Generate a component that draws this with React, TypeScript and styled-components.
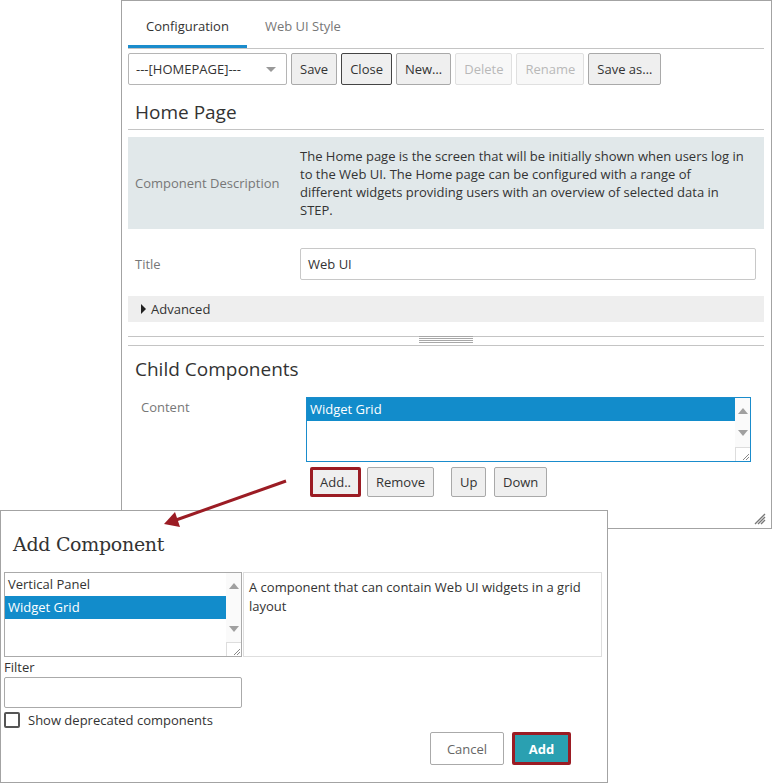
import React from "react";
import styled, { createGlobalStyle } from "styled-components";

const GlobalStyle = createGlobalStyle`
  html, body {
    margin: 0;
    padding: 0;
    background: #fff;
  }
  body {
    font-family: "Open Sans", "Noto Sans", sans-serif;
    font-size: 13px;
    color: #333;
  }
  * {
    box-sizing: border-box;
  }
`;

const RED = "#9b1c24";
const BLUE = "#1a8ccc";

const Desktop = styled.div`
  position: relative;
  width: 772px;
  height: 783px;
  overflow: hidden;
  background: #fff;
`;

const Window = styled.div<{ $left: number; $top: number; $width: number; $height: number }>`
  position: absolute;
  left: ${(p) => p.$left}px;
  top: ${(p) => p.$top}px;
  width: ${(p) => p.$width}px;
  height: ${(p) => p.$height}px;
  border: 1px solid #a3a3a3;
  background: #fff;
  display: flex;
  flex-direction: column;
`;

const MainBody = styled.div`
  padding: 0 7px 0 6px;
  display: flex;
  flex-direction: column;
  flex: 1;
`;

const TabBar = styled.div`
  display: flex;
  border-bottom: 1px solid #c4c4c4;
`;

const Tab = styled.div<{ $active?: boolean }>`
  height: 47px;
  padding: 6px 18px 0;
  display: flex;
  align-items: center;
  border-bottom: 3px solid ${(p) => (p.$active ? BLUE : "transparent")};
  color: ${(p) => (p.$active ? "#333" : "#777")};
`;

const Toolbar = styled.div`
  display: flex;
  gap: 4px;
  margin-top: 4px;
  height: 32px;
`;

const Select = styled.div`
  width: 159px;
  height: 32px;
  border: 1px solid #b5b5b5;
  border-radius: 2px;
  display: flex;
  align-items: center;
  justify-content: space-between;
  padding: 0 10px 0 7px;
  color: #333;
`;

const Caret = styled.span`
  width: 0;
  height: 0;
  border-left: 5px solid transparent;
  border-right: 5px solid transparent;
  border-top: 5px solid #999;
`;

const Button = styled.button<{
  $disabled?: boolean;
  $focused?: boolean;
  $marked?: boolean;
  $compact?: boolean;
  $w?: number;
}>`
  font-family: inherit;
  font-size: 13px;
  height: ${(p) => (p.$compact ? 30 : 32)}px;
  ${(p) => (p.$w ? `width: ${p.$w}px;` : "")}
  padding: 0 ${(p) => (p.$marked ? 7 : 8)}px;
  border-radius: 2px;
  background: ${(p) => (p.$disabled ? "#f8f8f8" : "#efefef")};
  color: ${(p) => (p.$disabled ? "#b8b8b8" : "#333")};
  border: ${(p) =>
    p.$marked
      ? `3px solid ${RED}`
      : p.$focused
      ? "1px solid #444"
      : p.$disabled
      ? "1px solid #e0e0e0"
      : "1px solid #a9a9a9"};
  cursor: default;
`;

const SectionHeading = styled.div<{ $ruled?: boolean }>`
  font-size: 19px;
  line-height: 26px;
  color: #333;
  padding: 0 7px;
  display: flex;
  align-items: flex-end;
  height: ${(p) => (p.$ruled ? 45 : 26)}px;
  padding-bottom: ${(p) => (p.$ruled ? 4 : 0)}px;
  border-bottom: ${(p) => (p.$ruled ? "1px solid #c4c4c4" : "none")};
  margin-top: ${(p) => (p.$ruled ? 0 : 10)}px;
`;

const FieldGrid = styled.div<{ $bg?: string; $top: number; $label: number }>`
  display: grid;
  grid-template-columns: ${(p) => p.$label}px 1fr;
  align-items: center;
  background: ${(p) => p.$bg ?? "transparent"};
  margin-top: ${(p) => p.$top}px;
`;

const Label = styled.div<{ $indent?: number; $alignTop?: boolean }>`
  color: #777;
  padding-left: ${(p) => p.$indent ?? 7}px;
  align-self: ${(p) => (p.$alignTop ? "start" : "center")};
  line-height: 20px;
`;

const Description = styled.div`
  padding: 10px 0 10px 0;
  line-height: 18px;
  color: #333;
  white-space: nowrap;
`;

const TextInput = styled.div`
  height: 32px;
  margin-right: 8px;
  border: 1px solid #c8c8c8;
  border-radius: 2px;
  padding: 0 7px;
  display: flex;
  align-items: center;
  color: #333;
`;

const Collapsible = styled.div`
  margin-top: 16px;
  height: 26px;
  background: #eee;
  display: flex;
  align-items: center;
  gap: 5px;
  padding-left: 13px;
  color: #333;
`;

const RightTriangle = styled.span`
  width: 0;
  height: 0;
  border-top: 5px solid transparent;
  border-bottom: 5px solid transparent;
  border-left: 5px solid #222;
`;

const Splitter = styled.div`
  margin-top: 14px;
  height: 10px;
  border-top: 1px solid #c4c4c4;
  border-bottom: 1px solid #c4c4c4;
  display: flex;
  justify-content: center;
`;

const Grip = styled.div`
  width: 54px;
  height: 7px;
  margin-top: -1px;
  background: repeating-linear-gradient(
    to bottom,
    #a8a8a8 0,
    #a8a8a8 1px,
    transparent 1px,
    transparent 2px
  );
`;

const ListBox = styled.div<{ $focused?: boolean; $height: number }>`
  position: relative;
  height: ${(p) => p.$height}px;
  border: 1px solid ${(p) => (p.$focused ? BLUE : "#aaa")};
  display: flex;
`;

const ListItems = styled.div`
  flex: 1;
  display: flex;
  flex-direction: column;
`;

const ListItem = styled.div<{ $selected?: boolean }>`
  height: 23px;
  line-height: 23px;
  padding-left: 3px;
  background: ${(p) => (p.$selected ? "#128ccb" : "transparent")};
  color: ${(p) => (p.$selected ? "#fff" : "#333")};
`;

const ScrollBar = styled.div`
  width: 15px;
  background: #fafafa;
  display: flex;
  flex-direction: column;
  align-items: center;
`;

const ArrowUp = styled.span<{ $top: number }>`
  margin-top: ${(p) => p.$top}px;
  width: 0;
  height: 0;
  border-left: 5px solid transparent;
  border-right: 5px solid transparent;
  border-bottom: 6px solid #a0a0a0;
`;

const ArrowDown = styled.span<{ $top: number }>`
  margin-top: ${(p) => p.$top}px;
  width: 0;
  height: 0;
  border-left: 5px solid transparent;
  border-right: 5px solid transparent;
  border-top: 6px solid #a0a0a0;
`;

const ResizeCorner = styled.div`
  margin-top: auto;
  width: 15px;
  height: 14px;
  border-top: 1px solid #ddd;
  border-left: 1px solid #ddd;
  background: #fff;
  display: flex;
  align-items: flex-end;
  justify-content: flex-end;
`;

const ButtonRow = styled.div`
  display: flex;
  align-items: center;
  margin-top: 5px;
  padding-left: 4px;
`;

const Spacer = styled.span<{ $w: number }>`
  width: ${(p) => p.$w}px;
  flex: none;
`;

const CornerGrip = styled.div`
  margin-top: auto;
  align-self: flex-end;
  margin-right: 5px;
  margin-bottom: 4px;
  width: 13px;
  height: 13px;
`;

/* dialog */

const DialogTitle = styled.div`
  font-family: "DejaVu Serif", "Liberation Serif", serif;
  font-size: 19px;
  letter-spacing: -0.3px;
  color: #333;
  height: 61px;
  padding: 20px 0 0 12px;
  line-height: 26px;
`;

const DialogBody = styled.div`
  padding: 0 5px 0 3px;
  display: flex;
  flex-direction: column;
`;

const PickerRow = styled.div`
  display: flex;
  gap: 1px;
`;

const PickerList = styled.div`
  width: 238px;
  flex: none;
`;

const HelpBox = styled.div`
  flex: 1;
  height: 85px;
  border: 1px solid #dedede;
  padding: 5px 5px;
  line-height: 19px;
  color: #333;
`;

const FieldLabel = styled.div`
  margin-top: 1px;
  line-height: 18px;
  color: #333;
`;

const FilterInput = styled.div`
  width: 238px;
  height: 31px;
  margin-top: 1px;
  border: 1px solid #aaa;
  border-radius: 2px;
`;

const CheckRow = styled.label`
  display: flex;
  align-items: center;
  gap: 8px;
  margin-top: 4px;
  height: 16px;
  color: #333;
`;

const CheckBox = styled.span`
  width: 16px;
  height: 16px;
  border: 2px solid #555;
  border-radius: 2px;
`;

const DialogActions = styled.div`
  display: flex;
  justify-content: flex-end;
  gap: 8px;
  margin-top: 4px;
  padding-right: 31px;
`;

const DialogButton = styled.button<{ $primary?: boolean }>`
  font-family: inherit;
  font-size: 13px;
  height: 33px;
  border-radius: 2px;
  cursor: default;
  ${(p) =>
    p.$primary
      ? `
    width: 59px;
    background: #2aa0b1;
    color: #fff;
    font-weight: 700;
    border: 3px solid ${RED};
  `
      : `
    width: 74px;
    background: #fff;
    color: #666;
    border: 1px solid #aaa;
  `}
`;

const Overlay = styled.svg`
  position: absolute;
  left: 0;
  top: 0;
  pointer-events: none;
`;

const Hatch = () => (
  <svg width="10" height="10" viewBox="0 0 10 10">
    <path d="M9 3 L3 9 M9 6 L6 9" stroke="#888" strokeWidth="1" />
  </svg>
);

const descriptionLines = [
  "The Home page is the screen that will be initially shown when users log in",
  "to the Web UI. The Home page can be configured with a range of",
  "different widgets providing users with an overview of selected data in",
  "STEP.",
];

export default function App() {
  return (
    <Desktop>
      <GlobalStyle />
      <Window $left={121} $top={0} $width={651} $height={529}>
        <MainBody>
          <TabBar>
            <Tab $active>Configuration</Tab>
            <Tab>Web UI Style</Tab>
          </TabBar>
          <Toolbar>
            <Select>
              <span>---[HOMEPAGE]---</span>
              <Caret />
            </Select>
            <Button>Save</Button>
            <Button $focused>Close</Button>
            <Button>New…</Button>
            <Button $disabled>Delete</Button>
            <Button $disabled>Rename</Button>
            <Button>Save as…</Button>
          </Toolbar>
          <SectionHeading $ruled>Home Page</SectionHeading>
          <FieldGrid $bg="#e1e8ea" $top={7} $label={172}>
            <Label>Component Description</Label>
            <Description>
              {descriptionLines.map((line, i) => (
                <div key={i}>{line}</div>
              ))}
            </Description>
          </FieldGrid>
          <FieldGrid $top={19} $label={172}>
            <Label>Title</Label>
            <TextInput>Web UI</TextInput>
          </FieldGrid>
          <Collapsible>
            <RightTriangle />
            Advanced
          </Collapsible>
          <Splitter>
            <Grip />
          </Splitter>
          <SectionHeading>Child Components</SectionHeading>
          <FieldGrid $top={15} $label={178}>
            <Label $indent={13} $alignTop>
              Content
            </Label>
            <div style={{ marginRight: 13 }}>
              <ListBox $focused $height={65}>
                <ListItems>
                  <ListItem $selected>Widget Grid</ListItem>
                </ListItems>
                <ScrollBar>
                  <ArrowUp $top={10} />
                  <ArrowDown $top={16} />
                  <ResizeCorner>
                    <Hatch />
                  </ResizeCorner>
                </ScrollBar>
              </ListBox>
              <ButtonRow>
                <Button $marked $compact>
                  Add..
                </Button>
                <Spacer $w={6} />
                <Button $compact>Remove</Button>
                <Spacer $w={17} />
                <Button $compact $w={35}>
                  Up
                </Button>
                <Spacer $w={8} />
                <Button $compact>Down</Button>
              </ButtonRow>
            </div>
          </FieldGrid>
        </MainBody>
        <CornerGrip>
          <svg width="13" height="13" viewBox="0 0 13 13">
            <path d="M12 2 L2 12 M12 5 L5 12 M12 8 L8 12" stroke="#777" strokeWidth="1.3" />
          </svg>
        </CornerGrip>
      </Window>

      <Window $left={0} $top={510} $width={608} $height={273}>
        <DialogTitle>Add Component</DialogTitle>
        <DialogBody>
          <PickerRow>
            <PickerList>
              <ListBox $height={85}>
                <ListItems>
                  <ListItem>Vertical Panel</ListItem>
                  <ListItem $selected>Widget Grid</ListItem>
                </ListItems>
                <ScrollBar>
                  <ArrowUp $top={10} />
                  <ArrowDown $top={37} />
                  <ResizeCorner>
                    <Hatch />
                  </ResizeCorner>
                </ScrollBar>
              </ListBox>
            </PickerList>
            <HelpBox>A component that can contain Web UI widgets in a grid layout</HelpBox>
          </PickerRow>
          <FieldLabel>Filter</FieldLabel>
          <FilterInput />
          <CheckRow>
            <CheckBox />
            Show deprecated components
          </CheckRow>
          <DialogActions>
            <DialogButton>Cancel</DialogButton>
            <DialogButton $primary>Add</DialogButton>
          </DialogActions>
        </DialogBody>
      </Window>

      <Overlay width="772" height="783" viewBox="0 0 772 783">
        <line x1="286" y1="481" x2="176" y2="520" stroke={RED} strokeWidth="3" />
        <polygon points="164,524 180,527 175,512" fill={RED} />
      </Overlay>
    </Desktop>
  );
}
